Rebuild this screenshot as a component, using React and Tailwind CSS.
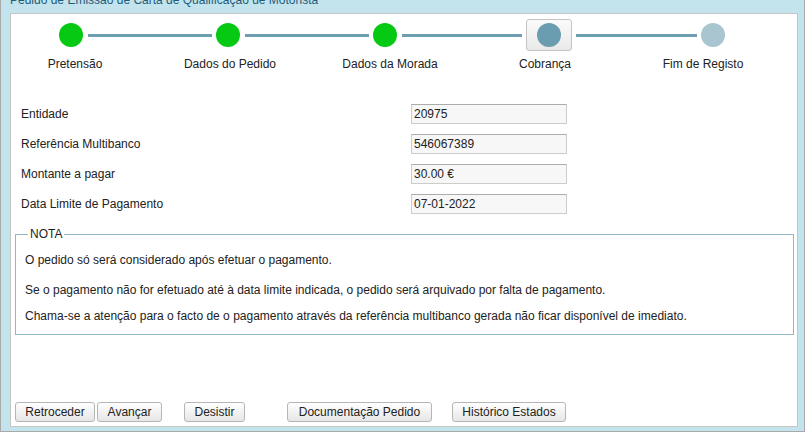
const steps = [
  { label: 'Pretensão', w: 'w-[128px]' },
  { label: 'Dados do Pedido', w: 'w-[182px]' },
  { label: 'Dados da Morada', w: 'w-[138px]' },
  { label: 'Cobrança', w: 'w-[172px]' },
  { label: 'Fim de Registo', w: 'w-[144px]' },
];

const fields = [
  { label: 'Entidade', value: '20975' },
  { label: 'Referência Multibanco', value: '546067389' },
  { label: 'Montante a pagar', value: '30.00 €' },
  { label: 'Data Limite de Pagamento', value: '07-01-2022' },
];

const Dot = ({ color }) => <div className={`w-[24px] h-[24px] rounded-full shrink-0 ${color}`} />;

const Line = ({ className }) => <div className={`h-[3px] bg-[#6e9fb1] shrink-0 ${className}`} />;

const Button = ({ children, className }) => (
  <button
    type="button"
    className={`h-[20px] border border-[#b5b5b5] rounded-[3px] bg-linear-to-b from-white to-[#e6e6e6] text-[12px] leading-[14px] text-[#222] text-center ${className}`}
  >
    {children}
  </button>
);

const App = () => {
  return (
    <div className="min-h-screen bg-white font-['Liberation_Sans',Arial,sans-serif] text-[12px] text-[#222] overflow-hidden">
      <div className="-mt-[10px] w-[805px] border border-[#a9a9a9] bg-[#c3e4ec] pb-[4px]">
        <div className="pt-[2px] pl-[9px] text-[12px] leading-[14px] text-[#1e5b7b]">
          Pedido de Emissão de Carta de Qualificação de Motorista
        </div>

        <div className="mt-[6px] ml-[9px] mr-[6px] h-[414px] border border-[#c6c6c6] bg-white flex flex-col">
          {/* stepper */}
          <div className="mt-[5px] h-[32px] pl-[48px] flex items-center">
            <Dot color="bg-[#05c912]" />
            <Line className="ml-[5px] w-[124px]" />
            <div className="ml-[4px]"><Dot color="bg-[#05c912]" /></div>
            <Line className="ml-[5px] w-[124px]" />
            <div className="ml-[4px]"><Dot color="bg-[#05c912]" /></div>
            <Line className="ml-[5px] w-[120px]" />
            <div className="ml-[4px] w-[46px] h-[32px] border border-[#c4c4c4] rounded-[3px] bg-linear-to-b from-[#fbfbfb] to-[#e9e9e9] flex items-center justify-center shrink-0">
              <Dot color="bg-[#6b9db0]" />
            </div>
            <Line className="ml-[4px] w-[121px]" />
            <div className="ml-[4px]"><Dot color="bg-[#a8c5d0]" /></div>
          </div>

          <div className="mt-[6px] flex leading-[14px]">
            {steps.map((s) => (
              <div key={s.label} className={`${s.w} text-center`}>{s.label}</div>
            ))}
          </div>

          {/* payment data */}
          <div className="mt-[33px] flex flex-col gap-[10px]">
            {fields.map((f) => (
              <div key={f.label} className="h-[20px] flex items-center">
                <div className="w-[400px] pl-[10px] leading-[14px]">{f.label}</div>
                <div className="w-[156px] h-[20px] border border-[#cccccc] border-t-[#acacac] bg-[#f7f7f7] pl-[2px] flex items-center leading-[14px]">
                  {f.value}
                </div>
              </div>
            ))}
          </div>

          <fieldset className="mt-[13px] ml-[4px] mr-[3px] border border-[#8fb7c6] pl-[9px] pb-[11px] leading-[14px]">
            <legend className="ml-[3px] px-[2px] leading-[14px]">NOTA</legend>
            <p className="mt-[12px]">O pedido só será considerado após efetuar o pagamento.</p>
            <p className="mt-[16px]">
              Se o pagamento não for efetuado até à data limite indicada, o pedido será arquivado por falta de pagamento.
            </p>
            <p className="mt-[12px]">
              Chama-se a atenção para o facto de o pagamento através da referência multibanco gerada não ficar disponível de imediato.
            </p>
          </fieldset>

          <div className="mt-auto pb-[4px] pl-[4px] flex">
            <Button className="w-[80px]">Retroceder</Button>
            <Button className="ml-[2px] w-[65px]">Avançar</Button>
            <Button className="ml-[22px] w-[61px]">Desistir</Button>
            <Button className="ml-[42px] w-[145px]">Documentação Pedido</Button>
            <Button className="ml-[20px] w-[114px]">Histórico Estados</Button>
          </div>
        </div>
      </div>
    </div>
  );
};

export default App;
